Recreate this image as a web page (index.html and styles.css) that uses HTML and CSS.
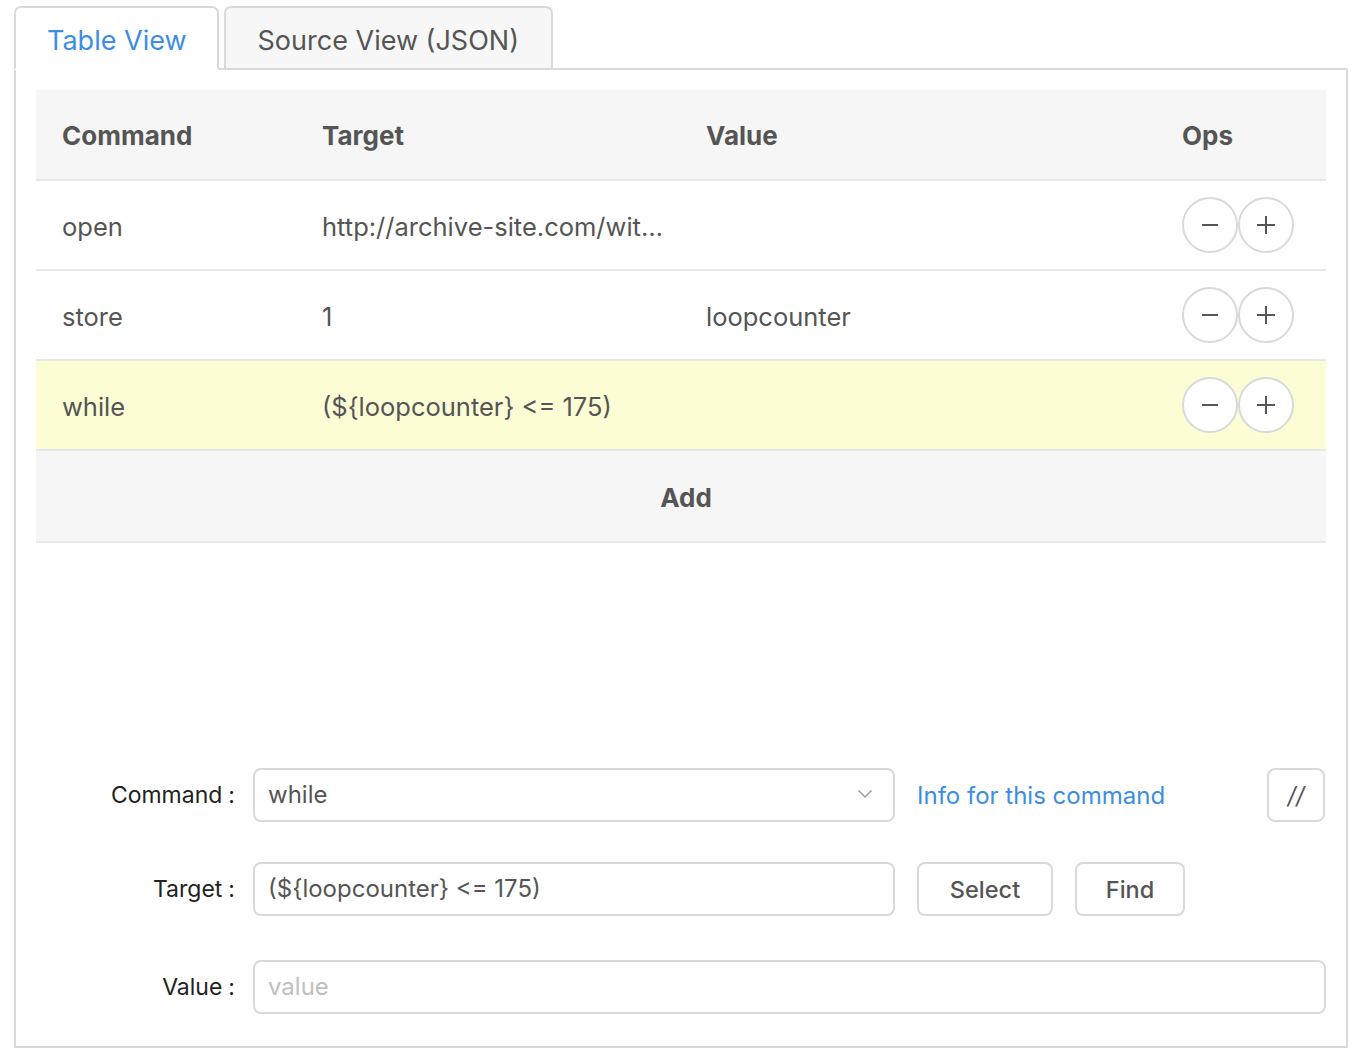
FILE: index.html
```html
<!DOCTYPE html>
<html>
<head>
<meta charset="utf-8">
<link rel="stylesheet" href="styles.css">
</head>
<body>
<div class="wrap">
  <div class="tabs">
    <div class="tab active">Table View</div>
    <div class="tab">Source View (JSON)</div>
  </div>
  <div class="pane">
    <div class="table">
      <div class="row head">
        <div class="cell">Command</div>
        <div class="cell">Target</div>
        <div class="cell">Value</div>
        <div class="cell">Ops</div>
      </div>
      <div class="row">
        <div class="cell">open</div>
        <div class="cell">http://archive-site.com/wit…</div>
        <div class="cell"></div>
        <div class="cell ops">
          <span class="circ"><svg width="20" height="20" viewBox="0 0 20 20"><path d="M2 10h16" stroke="#555" stroke-width="2"/></svg></span><span class="circ"><svg width="20" height="20" viewBox="0 0 20 20"><path d="M1 10h18M10 1v18" stroke="#555" stroke-width="2"/></svg></span>
        </div>
      </div>
      <div class="row">
        <div class="cell">store</div>
        <div class="cell">1</div>
        <div class="cell">loopcounter</div>
        <div class="cell ops">
          <span class="circ"><svg width="20" height="20" viewBox="0 0 20 20"><path d="M2 10h16" stroke="#555" stroke-width="2"/></svg></span><span class="circ"><svg width="20" height="20" viewBox="0 0 20 20"><path d="M1 10h18M10 1v18" stroke="#555" stroke-width="2"/></svg></span>
        </div>
      </div>
      <div class="row selected">
        <div class="cell">while</div>
        <div class="cell">(${loopcounter} &lt;= 175)</div>
        <div class="cell"></div>
        <div class="cell ops">
          <span class="circ"><svg width="20" height="20" viewBox="0 0 20 20"><path d="M2 10h16" stroke="#555" stroke-width="2"/></svg></span><span class="circ"><svg width="20" height="20" viewBox="0 0 20 20"><path d="M1 10h18M10 1v18" stroke="#555" stroke-width="2"/></svg></span>
        </div>
      </div>
      <div class="add">Add</div>
    </div>

    <div class="form">
      <div class="frow r1">
        <label class="lbl">Command<span class="colon">:</span></label>
        <div class="field select">
          <span>while</span>
          <svg width="16" height="10" viewBox="0 0 16 10"><path d="M1.5 1.5L8 8l6.5-6.5" fill="none" stroke="#999" stroke-width="1.5"/></svg>
        </div>
        <a class="link">Info for this command</a>
        <div class="spacer"></div>
        <button class="btn slash">//</button>
      </div>
      <div class="frow r2">
        <label class="lbl">Target<span class="colon">:</span></label>
        <div class="field"><span>(${loopcounter} &lt;= 175)</span></div>
        <button class="btn sel">Select</button>
        <button class="btn find">Find</button>
      </div>
      <div class="frow r3">
        <label class="lbl">Value<span class="colon">:</span></label>
        <div class="field wide"><span class="ph">value</span></div>
      </div>
    </div>
  </div>
</div>
</body>
</html>
```
FILE: styles.css
```css
* { box-sizing: border-box; }
body {
  margin: 0;
  background: #fff;
  font-family: Inter, "Noto Sans", sans-serif;
  color: #555;
}
.wrap {
  padding: 6px 14px 0 14px;
  width: 1362px;
}
.tabs {
  display: flex;
  gap: 5px;
  margin-bottom: -2px;
  position: relative;
  z-index: 1;
}
.tab {
  height: 64px;
  border: 2px solid #d9d9d9;
  border-radius: 7px 7px 0 0;
  background: #f7f7f7;
  font-size: 27px;
  display: flex;
  align-items: center;
  padding: 4px 32px 0 32px;
  color: #555;
}
.tab.active {
  background: #fff;
  color: #3b8ee2;
  border-bottom-color: #fff;
  padding-left: 31px;
  padding-right: 30px;
}
.pane {
  border: 2px solid #d9d9d9;
  padding: 20px 20px 32px 20px;
  height: 980px;
  display: flex;
  flex-direction: column;
}
.table {
  display: flex;
  flex-direction: column;
}
.row {
  display: grid;
  grid-template-columns: 260px 384px 476px 170px;
  height: 90px;
  border-bottom: 2px solid #e8e8e8;
  align-items: center;
  font-size: 25.5px;
}
.row .cell { padding-top: 2px; }
.row.head {
  background: #f6f6f6;
  font-weight: 700;
  font-size: 26px;
  height: 91px;
}
.row.selected { background: #fcfdd5; }
.cell {
  padding-left: 26px;
  white-space: nowrap;
}
.ops { display: flex; }
.row .ops { padding-top: 0; }
.circ {
  width: 56px;
  height: 56px;
  border: 2px solid #d9d9d9;
  border-radius: 50%;
  background: #fff;
  display: flex;
  align-items: center;
  justify-content: center;
}
.add {
  height: 92px;
  background: #f6f6f6;
  border-bottom: 2px solid #e8e8e8;
  display: flex;
  align-items: center;
  justify-content: center;
  padding: 2px 0 0 10px;
  font-weight: 700;
  font-size: 26px;
}
.form {
  margin-top: auto;
  display: flex;
  flex-direction: column;
}
.frow {
  display: flex;
  align-items: center;
  height: 54px;
}
.r1 { margin-top: -1px; }
.r2 { margin-top: 40px; }
.r3 { margin-top: 44px; }
.lbl {
  width: 217px;
  padding-right: 18px;
  text-align: right;
  font-size: 23px;
  color: #222;
  flex: none;
}
.colon { margin-left: 6px; }
.field {
  width: 642px;
  height: 54px;
  border: 2px solid #d9d9d9;
  border-radius: 8px;
  display: flex;
  align-items: center;
  justify-content: space-between;
  padding: 0 20px 2px 13px;
  font-size: 24px;
  color: #555;
  flex: none;
}
.field.wide { width: 1073px; }
.ph { color: #bfbfbf; }
.link {
  margin-left: 22px;
  color: #3b8ee2;
  font-size: 24px;
}
.spacer { flex: 1; }
.btn {
  height: 54px;
  border: 2px solid #d9d9d9;
  border-radius: 8px;
  background: #fff;
  font-family: inherit;
  font-size: 23.5px;
  font-weight: 500;
  color: #555;
  padding: 0;
}
.slash { width: 58px; font-weight: 400; font-style: italic; margin-right: 1px; }
.sel { width: 136px; margin-left: 22px; }
.find { width: 110px; margin-left: 22px; }
```
